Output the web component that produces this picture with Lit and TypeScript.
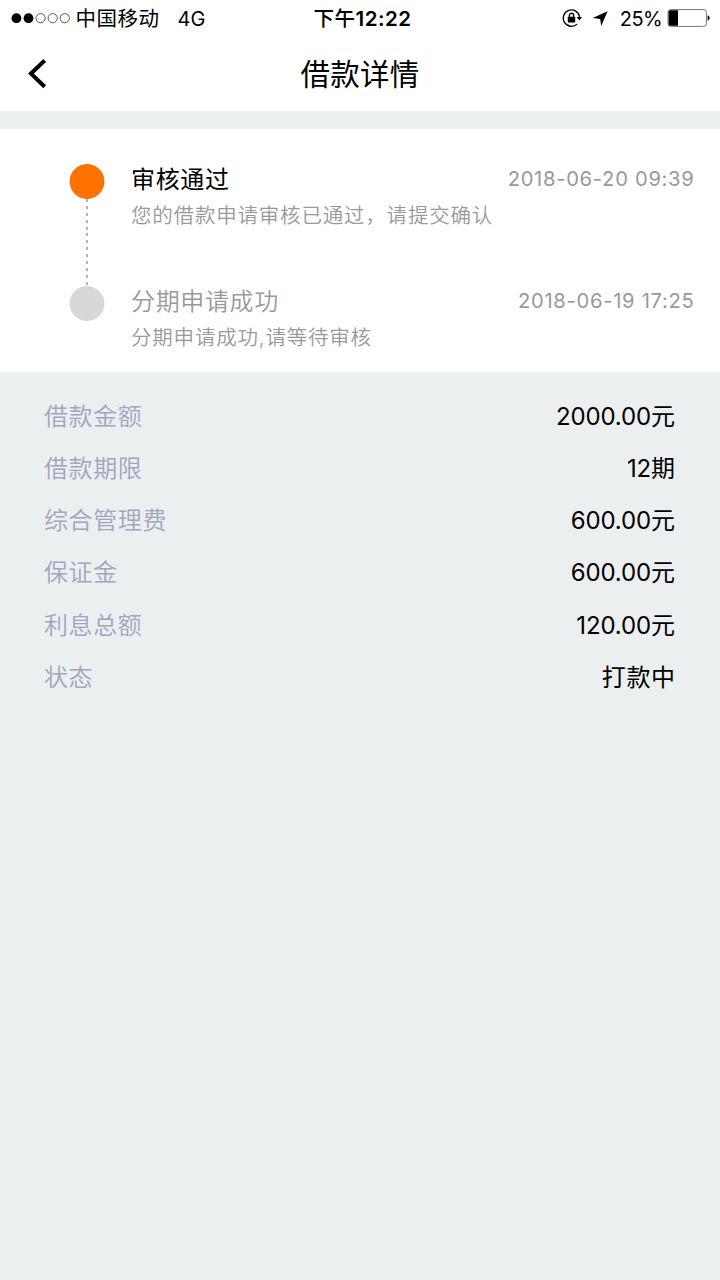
import { LitElement, html, css, svg } from "lit";
import { customElement } from "lit/decorators.js";

const steps = [
  { title: "审核通过", time: "2018-06-20 09:39", note: "您的借款申请审核已通过，请提交确认", active: true },
  { title: "分期申请成功", time: "2018-06-19 17:25", note: "分期申请成功,请等待审核", active: false },
];

const rows = [
  { label: "借款金额", num: "2000.00", unit: "元" },
  { label: "借款期限", num: "12", unit: "期" },
  { label: "综合管理费", num: "600.00", unit: "元" },
  { label: "保证金", num: "600.00", unit: "元" },
  { label: "利息总额", num: "120.00", unit: "元" },
  { label: "状态", num: "", unit: "打款中" },
];

@customElement("status-bar")
class StatusBar extends LitElement {
  static styles = css`
    :host { display: grid; grid-template-columns: 1fr auto 1fr; height: 37px; align-items: center; padding: 0 10px 0 11px; box-sizing: border-box; line-height: 37px; font-size: 20px; color: #000; }
    .side { display: flex; align-items: center; height: 37px; white-space: pre; }
    .right { justify-content: flex-end; }
    .carrier { margin-left: 4.5px; font-size: 20.5px; letter-spacing: 0.5px; }
    .net { margin-left: 18px; font-size: 20px; padding-top: 1px; letter-spacing: 0.2px; }
    .time { font-weight: 600; font-size: 20.5px; letter-spacing: 0.5px; padding-left: 4px; }
    .cn { font-weight: 500; }
    .lock { margin-right: 10px; }
    .arrow { margin-right: 12px; }
    .pct { font-size: 20px; margin-right: 5px; letter-spacing: -0.6px; padding-top: 1px; }
    svg { display: block; flex: none; }
  `;
  render() {
    return html`
      <div class="side">
        <svg width="60" height="12" viewBox="0 0 60 12">
          ${[0, 1, 2, 3, 4].map((i) => i < 2
            ? svg`<circle cx=${5.4 + i * 12.1} cy="5.2" r="4.9" fill="#000"/>`
            : svg`<circle cx=${5.4 + i * 12.1} cy="5.2" r="4.6" fill="none" stroke="#333" stroke-width=".8"/>`)}
        </svg>
        <span class="carrier">中国移动</span><span class="net">4G</span>
      </div>
      <div class="time"><span class="cn">下午</span>12:22</div>
      <div class="side right">
        <svg class="lock" width="20" height="20" viewBox="0 0 20 20">
          <path d="M17.6 7.9A8.2 8.2 0 1 0 15.1 15.1" fill="none" stroke="#000" stroke-width="1.3"/>
          <path d="M14.7 8h5.3l-2.6 3.5z"/>
          <rect x="5.8" y="7.7" width="7.4" height="5.8" rx=".6"/>
          <path d="M7.4 8.2V6.4a2.1 2.1 0 0 1 4.2 0V8.2" fill="none" stroke="#000" stroke-width="1.4"/>
        </svg>
        <svg class="arrow" width="16" height="16" viewBox="0 0 16 16"><path d="M15.6 .2L9.2 15 8.2 8.1.7 7.1z"/></svg>
        <span class="pct">25%</span>
        <svg width="43" height="19" viewBox="0 0 43 19">
          <rect x="1" y=".6" width="38.4" height="16.8" rx="2.6" fill="#fff" stroke="#777" stroke-width="1"/>
          <path d="M3.2 1.2h7.8v15.6H3.2a1.6 1.6 0 0 1-1.6-1.6V2.8A1.6 1.6 0 0 1 3.2 1.2z"/>
          <path d="M40.6 6.3c2.6 .7 2.6 4.7 0 5.4z"/>
        </svg>
      </div>`;
  }
}

@customElement("nav-bar")
class NavBar extends LitElement {
  static styles = css`
    :host { display: grid; grid-template-columns: 60px 1fr 60px; align-items: center; height: 74px; color: #000; }
    svg { display: block; margin-left: 27px; }
    .title { text-align: center; font-size: 29.5px; letter-spacing: 0.2px; line-height: 74px; }
  `;
  render() {
    return html`
      <svg width="21" height="32" viewBox="0 0 21 32"><path d="M17.7 2.5L4 15.6 17.7 28.7" fill="none" stroke="#000" stroke-width="4"/></svg>
      <div class="title">借款详情</div><span></span>`;
  }
}

@customElement("app-root")
class AppRoot extends LitElement {
  static styles = css`
    :host { display: block; min-height: 1280px; background: #ebeff0; font-family: Inter, "Noto Sans CJK SC", sans-serif; white-space: nowrap; }
    .top { background: #fff; height: 111px; }
    .timeline { margin-top: 18px; background: #fff; height: 243px; padding: 35px 26px 0 69px; box-sizing: border-box; }
    .step { display: grid; grid-template-columns: 36px 1fr; column-gap: 26px; height: 121.7px; }
    .rail { display: flex; flex-direction: column; align-items: center; }
    .dot { width: 36px; height: 35px; background: radial-gradient(circle at 50% 50%, #d8d8d8 17px, transparent 17.8px); flex: none; }
    .active .dot { background: radial-gradient(circle at 50% 50%, #ff7200 17px, transparent 17.8px); }
    .dash { width: 2px; flex: 1; background: repeating-linear-gradient(to bottom, #b4b4b4 0 3px, transparent 3px 6.9px); }
    .head { display: flex; justify-content: space-between; height: 31px; line-height: 31px; color: #999; }
    .title { font-size: 24px; font-weight: 350; letter-spacing: 0.65px; }
    .active .title { color: #000; font-weight: 400; }
    .time { font-size: 20.2px; letter-spacing: 0.7px; margin-right: -0.5px; line-height: 30px; }
    .note { margin-top: 5px; height: 30px; line-height: 31px; font-size: 20.5px; font-weight: 350; letter-spacing: 0.8px; color: #999; }
    .details { padding: 19px 45px 0 44px; }
    .row { display: flex; justify-content: space-between; height: 52.15px; line-height: 52px; }
    .label { font-size: 24px; font-weight: 350; letter-spacing: 0.6px; color: #a2a5bd; }
    .value { font-size: 24px; color: #000; }
    .num { letter-spacing: -0.15px; }
    .unit { letter-spacing: 0.6px; margin-right: -0.6px; }
  `;
  render() {
    return html`
      <div class="top" lang="zh-CN"><status-bar></status-bar><nav-bar></nav-bar></div>
      <div class="timeline" lang="zh-CN">
        ${steps.map((s) => html`
          <div class="step ${s.active ? "active" : ""}">
            <div class="rail"><div class="dot"></div>${s.active ? html`<div class="dash"></div>` : ""}</div>
            <div>
              <div class="head"><span class="title">${s.title}</span><span class="time">${s.time}</span></div>
              <div class="note">${s.note}</div>
            </div>
          </div>`)}
      </div>
      <div class="details" lang="zh-CN">
        ${rows.map((r) => html`
          <div class="row"><span class="label">${r.label}</span><span class="value"><span class="num">${r.num}</span><span class="unit">${r.unit}</span></span></div>`)}
      </div>`;
  }
}
